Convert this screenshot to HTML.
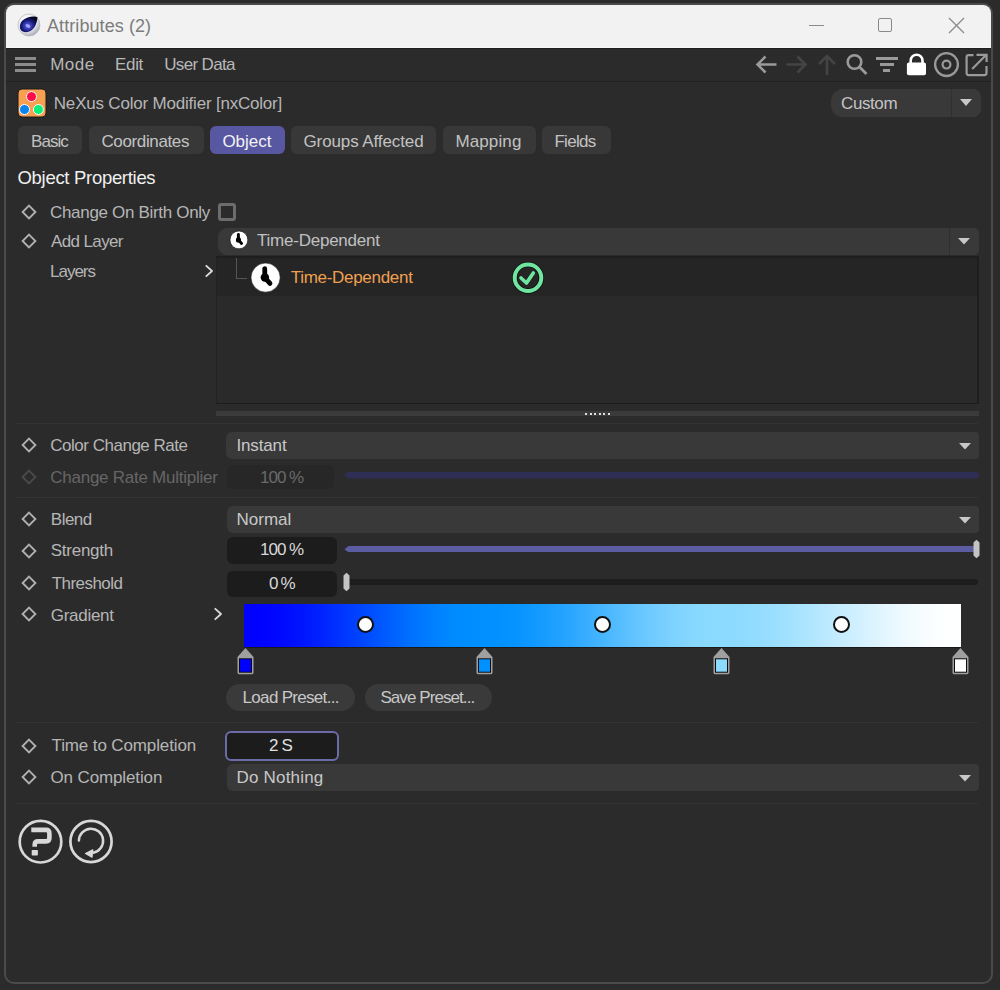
<!DOCTYPE html><html><head><meta charset="utf-8"><style>
html,body{margin:0;padding:0;}
body{width:1000px;height:990px;background:#2b2b2b;position:relative;overflow:hidden;font-family:"Liberation Sans", sans-serif;}
body div, body svg{position:absolute;}
.t{white-space:pre;line-height:20px;}
</style></head><body>
<div style="left:4px;top:3px;width:985px;height:977px;border:2px solid #4a4a4a;border-radius:10px;background:#2b2b2b"></div>
<div style="left:6px;top:5px;width:985px;height:42px;background:#f2f2f2;border-radius:8px 8px 0 0"></div>
<div style="left:6px;top:47px;width:985px;height:1px;background:#f8f8f8;"></div>
<div style="left:6px;top:48px;width:985px;height:1px;background:#1f1f1f;"></div>
<div style="left:6px;top:81px;width:985px;height:1px;background:#212121;"></div>
<svg style="left:17px;top:13px" width="24" height="24" viewBox="0 0 24 24"><defs>
<radialGradient id="lg1" cx="0.35" cy="0.3" r="0.8"><stop offset="0" stop-color="#ffffff"/><stop offset="0.6" stop-color="#e8e9ee"/><stop offset="1" stop-color="#9a9ea8"/></radialGradient>
<radialGradient id="lg2" cx="0.45" cy="0.6" r="0.6"><stop offset="0" stop-color="#9aa0ff"/><stop offset="0.25" stop-color="#4448c0"/><stop offset="0.6" stop-color="#161a78"/><stop offset="1" stop-color="#04051f"/></radialGradient>
</defs>
<circle cx="12" cy="12" r="11" fill="url(#lg1)" stroke="#b4b6bc" stroke-width="0.7"/>
<path d="M20.5,4.3 C18,2.8 10,3.2 5.5,7.5 C2.3,10.5 2.2,15.5 4.5,17.8 C7,20 12,19.5 15.5,16.5 C18.5,14 20,9.5 20.5,4.3 Z" fill="url(#lg2)"/>
<ellipse cx="11" cy="13" rx="2.6" ry="1.5" transform="rotate(30 11 13)" fill="#b0b6ff" opacity="0.7"/></svg>
<div class="t" style="left:47.00px;top:16px;font-size:18px;color:#7c7c7c;letter-spacing:0.077px;">Attributes (2)</div>
<div style="left:809px;top:25px;width:15px;height:1px;background:#8a8a8a;"></div>
<div style="left:878px;top:18px;width:12px;height:12px;border:1.5px solid #8a8a8a;border-radius:2px"></div>
<svg style="left:948px;top:17px" width="17" height="17" viewBox="0 0 17 17"><path d="M1,1 L16,16 M16,1 L1,16" stroke="#8a8a8a" stroke-width="1.3"/></svg>
<div style="left:15px;top:57px;width:21px;height:3px;background:#8c8c8c;"></div>
<div style="left:15px;top:63px;width:21px;height:3px;background:#8c8c8c;"></div>
<div style="left:15px;top:69px;width:21px;height:3px;background:#8c8c8c;"></div>
<div class="t" style="left:50.20px;top:55px;font-size:17px;color:#b8b8b8;letter-spacing:0.500px;">Mode</div>
<div class="t" style="left:115.00px;top:55px;font-size:17px;color:#b8b8b8;letter-spacing:-0.333px;">Edit</div>
<div class="t" style="left:164.20px;top:55px;font-size:17px;color:#b8b8b8;letter-spacing:-0.650px;">User Data</div>
<svg style="left:754px;top:52px" width="26" height="25" viewBox="0 0 26 25"><path d="M22.5,12.5 H4 M11.5,4.5 L3.5,12.5 L11.5,20.5" fill="none" stroke="#9a9a9a" stroke-width="2.6"/></svg>
<svg style="left:784px;top:52px" width="26" height="25" viewBox="0 0 26 25"><path d="M2.5,12.5 H21 M13.5,4.5 L21.5,12.5 L13.5,20.5" fill="none" stroke="#444444" stroke-width="2.6"/></svg>
<svg style="left:815px;top:52px" width="24" height="25" viewBox="0 0 24 25"><path d="M12,23 V4 M4,12 L12,4 L20,12" fill="none" stroke="#444444" stroke-width="2.6"/></svg>
<svg style="left:844px;top:52px" width="26" height="25" viewBox="0 0 26 25"><circle cx="10.5" cy="10" r="6.8" fill="none" stroke="#9a9a9a" stroke-width="2.6"/><path d="M15.5,15 L22.5,22" stroke="#9a9a9a" stroke-width="2.8"/></svg>
<div style="left:875.5px;top:56.8px;width:22px;height:3.2px;background:#9a9a9a;"></div>
<div style="left:880px;top:63px;width:13.5px;height:3.2px;background:#9a9a9a;"></div>
<div style="left:883px;top:69px;width:7px;height:3.2px;background:#9a9a9a;"></div>
<svg style="left:905px;top:52px" width="23" height="25" viewBox="0 0 23 25"><path d="M5.7,11 V8.6 A5.9,5.9 0 0 1 17.5,8.6 V11" fill="none" stroke="#ffffff" stroke-width="2.6"/><rect x="1.9" y="10.4" width="19.1" height="12.8" rx="2" fill="#ffffff"/></svg>
<svg style="left:933px;top:51px" width="27" height="27" viewBox="0 0 27 27"><circle cx="13.5" cy="13.6" r="11.4" fill="none" stroke="#9a9a9a" stroke-width="2.3"/><circle cx="13.5" cy="13.6" r="3.9" fill="none" stroke="#9a9a9a" stroke-width="2.2"/></svg>
<svg style="left:964px;top:52px" width="26" height="25" viewBox="0 0 26 25"><path d="M9.5,3.1 H4.6 Q2.6,3.1 2.6,5.1 V21.1 Q2.6,23.1 4.6,23.1 H20.5 Q22.5,23.1 22.5,21.1 V14" fill="none" stroke="#9a9a9a" stroke-width="2.2"/><path d="M8.2,17 L21.5,3.5 M12.5,2.8 H22.6 V10" fill="none" stroke="#9a9a9a" stroke-width="2.2"/></svg>
<svg style="left:17px;top:88px" width="30" height="30" viewBox="0 0 30 30"><rect x="1" y="1" width="28" height="28" rx="4" fill="#f7a052" stroke="#1a1a1a" stroke-width="1"/>
<circle cx="14.5" cy="8.6" r="5" fill="#ff0a48" stroke="#ffffff" stroke-width="1"/>
<circle cx="7.5" cy="21.5" r="5" fill="#0a84f0" stroke="#ffffff" stroke-width="1"/>
<circle cx="21.4" cy="21.5" r="5" fill="#08f07a" stroke="#ffffff" stroke-width="1"/></svg>
<div class="t" style="left:53.80px;top:94px;font-size:17px;color:#b6b6b6;letter-spacing:-0.200px;">NeXus Color Modifier [nxColor]</div>
<div style="left:831px;top:89px;width:150px;height:28px;background:#393939;border-radius:12px 8px 8px 12px"></div>
<div style="left:951px;top:89px;width:1px;height:28px;background:#2f2f2f;"></div>
<svg style="left:960px;top:99px" width="12" height="8" viewBox="0 0 12 8"><path d="M0,0 H12 L6,7 Z" fill="#c8c8c8"/></svg>
<div class="t" style="left:841.00px;top:94px;font-size:17px;color:#c4c4c4;letter-spacing:-0.400px;">Custom</div>
<div style="left:18px;top:126px;width:64px;height:28px;background:#383838;border-radius:6px"></div>
<div class="t" style="left:31.00px;top:132px;font-size:17px;color:#c2c2c2;letter-spacing:-0.950px;">Basic</div>
<div style="left:88.5px;top:126px;width:115.5px;height:28px;background:#383838;border-radius:6px"></div>
<div class="t" style="left:101.40px;top:132px;font-size:17px;color:#c2c2c2;letter-spacing:-0.360px;">Coordinates</div>
<div style="left:210px;top:126px;width:75px;height:28px;background:#5858a2;border-radius:6px"></div>
<div class="t" style="left:222.40px;top:132px;font-size:17px;color:#f2f2f2;letter-spacing:0.000px;">Object</div>
<div style="left:291px;top:126px;width:145px;height:28px;background:#383838;border-radius:6px"></div>
<div class="t" style="left:303.50px;top:132px;font-size:17px;color:#c2c2c2;letter-spacing:-0.107px;">Groups Affected</div>
<div style="left:442.5px;top:126px;width:93.0px;height:28px;background:#383838;border-radius:6px"></div>
<div class="t" style="left:455.40px;top:132px;font-size:17px;color:#c2c2c2;letter-spacing:0.133px;">Mapping</div>
<div style="left:541.5px;top:126px;width:69.0px;height:28px;background:#383838;border-radius:6px"></div>
<div class="t" style="left:554.40px;top:132px;font-size:17px;color:#c2c2c2;letter-spacing:-0.680px;">Fields</div>
<div class="t" style="left:17.50px;top:167.7px;font-size:18.5px;color:#f0f0f0;letter-spacing:-0.300px;">Object Properties</div>
<svg style="left:20.5px;top:203.5px" width="16" height="16" viewBox="0 0 16 16"><path d="M8,1.6 L14.4,8 L8,14.4 L1.6,8 Z" fill="none" stroke="#b0b0b0" stroke-width="1.9"/></svg>
<div class="t" style="left:50.00px;top:202.5px;font-size:17px;color:#b6b6b6;letter-spacing:-0.316px;">Change On Birth Only</div>
<div style="left:217.7px;top:202.5px;width:12.3px;height:12.3px;border:3px solid #6c6c6c;border-radius:3px"></div>
<svg style="left:20.5px;top:233.4px" width="16" height="16" viewBox="0 0 16 16"><path d="M8,1.6 L14.4,8 L8,14.4 L1.6,8 Z" fill="none" stroke="#b0b0b0" stroke-width="1.9"/></svg>
<div class="t" style="left:51.00px;top:231.6px;font-size:17px;color:#b6b6b6;letter-spacing:-0.625px;">Add Layer</div>
<div class="t" style="left:50.00px;top:261.6px;font-size:17px;color:#b6b6b6;letter-spacing:-1.000px;">Layers</div>
<svg style="left:202.5px;top:264px" width="12" height="14" viewBox="0 0 12 14"><path d="M3.3,1.8 L9,7 L3.3,12.2" fill="none" stroke="#dcdcdc" stroke-width="1.8" stroke-linecap="round" stroke-linejoin="round"/></svg>
<div style="left:218px;top:228px;width:761px;height:27px;background:#393939;border-radius:9px 5px 5px 9px"></div>
<div style="left:949px;top:228px;width:1px;height:27px;background:#2f2f2f;"></div>
<svg style="left:957.5px;top:238px" width="12" height="8" viewBox="0 0 12 8"><path d="M0,0 H12 L6,6.5 Z" fill="#c8c8c8"/></svg>
<svg style="left:229.29999999999998px;top:230.4px" width="19.8" height="19.8" viewBox="0 0 19.8 19.8"><circle cx="9.9" cy="9.9" r="8.9" fill="#ffffff" stroke="#111" stroke-width="0.6"/><circle cx="9.455" cy="9.9" r="2.581" fill="#000"/><path d="M9.366,4.382000000000001 L9.455,9.9 L12.57,13.46" fill="none" stroke="#000" stroke-width="2.9370000000000003" stroke-linecap="round" stroke-linejoin="round"/></svg>
<div class="t" style="left:257.00px;top:231.4px;font-size:17px;color:#c0c0c0;letter-spacing:-0.231px;">Time-Dependent</div>
<div style="left:216px;top:256px;width:763px;height:148px;background:#2a2a2a;box-sizing:border-box;border-left:1px solid #222222;border-top:2px solid #1e1e1e;border-right:2px solid #1e1e1e;border-bottom:1px solid #1d1d1d"></div>
<div style="left:217px;top:258px;width:760px;height:38px;background:#252525;"></div>
<div style="left:236px;top:258px;width:1px;height:21px;background:#555555;"></div>
<div style="left:236px;top:278px;width:11px;height:1px;background:#555555;"></div>
<svg style="left:249.70000000000002px;top:261.7px" width="31.2" height="31.2" viewBox="0 0 31.2 31.2"><circle cx="15.6" cy="15.6" r="14.6" fill="#ffffff" stroke="#111" stroke-width="0.6"/><circle cx="14.87" cy="15.6" r="4.234" fill="#000"/><path d="M14.724,6.548 L14.87,15.6 L19.98,21.439999999999998" fill="none" stroke="#000" stroke-width="4.8180000000000005" stroke-linecap="round" stroke-linejoin="round"/></svg>
<div class="t" style="left:290.70px;top:267.9px;font-size:17px;color:#f0a050;letter-spacing:-0.292px;">Time-Dependent</div>
<svg style="left:510px;top:260px" width="36" height="36" viewBox="0 0 36 36"><circle cx="18" cy="17.7" r="13.3" fill="none" stroke="#0a0a0a" stroke-width="5.4"/><circle cx="18" cy="17.7" r="13.3" fill="none" stroke="#6ee6a0" stroke-width="4"/><path d="M11,18 L16.5,23 L23.3,13" fill="none" stroke="#6ee6a0" stroke-width="3.6" stroke-linecap="round" stroke-linejoin="round"/></svg>
<div style="left:216px;top:411px;width:763px;height:5px;background:#3b3b3b;"></div>
<div style="left:585px;top:413px;width:2px;height:2px;background:#e0e0e0;"></div>
<div style="left:589.5px;top:413px;width:2px;height:2px;background:#e0e0e0;"></div>
<div style="left:594px;top:413px;width:2px;height:2px;background:#e0e0e0;"></div>
<div style="left:598.5px;top:413px;width:2px;height:2px;background:#e0e0e0;"></div>
<div style="left:603px;top:413px;width:2px;height:2px;background:#e0e0e0;"></div>
<div style="left:607.5px;top:413px;width:2px;height:2px;background:#e0e0e0;"></div>
<div style="left:16px;top:423px;width:962px;height:1px;background:#333333;"></div>
<svg style="left:20.5px;top:437.2px" width="16" height="16" viewBox="0 0 16 16"><path d="M8,1.6 L14.4,8 L8,14.4 L1.6,8 Z" fill="none" stroke="#b0b0b0" stroke-width="1.9"/></svg>
<div class="t" style="left:50.30px;top:435.8px;font-size:17px;color:#b6b6b6;letter-spacing:-0.488px;">Color Change Rate</div>
<div style="left:226px;top:432px;width:753px;height:27px;background:#393939;border-radius:6px 4px 4px 6px"></div>
<svg style="left:958.5px;top:443.2px" width="12" height="8" viewBox="0 0 12 8"><path d="M0,0 H12 L6,6.5 Z" fill="#c8c8c8"/></svg>
<div class="t" style="left:236.40px;top:436px;font-size:17px;color:#c8c8c8;letter-spacing:-0.133px;">Instant</div>
<svg style="left:20.5px;top:468.9px" width="16" height="16" viewBox="0 0 16 16"><path d="M8,1.6 L14.4,8 L8,14.4 L1.6,8 Z" fill="none" stroke="#4a4a4a" stroke-width="1.9"/></svg>
<div class="t" style="left:50.30px;top:467.8px;font-size:17px;color:#666666;letter-spacing:-0.257px;">Change Rate Multiplier</div>
<div style="left:227px;top:465px;width:107px;height:24px;background:#272727;border-radius:6px"></div>
<div class="t" style="left:260.00px;top:468px;font-size:17px;color:#6a6a6a;letter-spacing:-1.000px;">100 %</div>
<svg style="left:344px;top:472px" width="635" height="6.5" viewBox="0 0 635 6.5"><path d="M0,3.25 L4.0625,0 H631.75 A3.25,3.25 0 0 1 631.75,6.5 H4.0625 Z" fill="#2f2e54"/></svg>
<div style="left:16px;top:497px;width:962px;height:1px;background:#333333;"></div>
<svg style="left:20.5px;top:510.9px" width="16" height="16" viewBox="0 0 16 16"><path d="M8,1.6 L14.4,8 L8,14.4 L1.6,8 Z" fill="none" stroke="#b0b0b0" stroke-width="1.9"/></svg>
<div class="t" style="left:50.80px;top:510px;font-size:17px;color:#b6b6b6;letter-spacing:-0.500px;">Blend</div>
<div style="left:227px;top:505.5px;width:752px;height:27.100000000000023px;background:#393939;border-radius:6px 4px 4px 6px"></div>
<svg style="left:958.5px;top:516.75px" width="12" height="8" viewBox="0 0 12 8"><path d="M0,0 H12 L6,6.5 Z" fill="#c8c8c8"/></svg>
<div class="t" style="left:236.40px;top:510px;font-size:17px;color:#c8c8c8;letter-spacing:0.040px;">Normal</div>
<svg style="left:20.5px;top:542.6px" width="16" height="16" viewBox="0 0 16 16"><path d="M8,1.6 L14.4,8 L8,14.4 L1.6,8 Z" fill="none" stroke="#b0b0b0" stroke-width="1.9"/></svg>
<div class="t" style="left:50.80px;top:541px;font-size:17px;color:#b6b6b6;letter-spacing:-0.271px;">Strength</div>
<div style="left:227px;top:537px;width:110px;height:27px;background:#1c1c1c;border-radius:6px"></div>
<div class="t" style="left:260.00px;top:540.4px;font-size:17px;color:#d8d8d8;letter-spacing:-1.000px;">100 %</div>
<svg style="left:344px;top:545.8px" width="632" height="6.4" viewBox="0 0 632 6.4"><path d="M0,3.2 L4.0,0 H628.8 A3.2,3.2 0 0 1 628.8,6.4 H4.0 Z" fill="#5b5ca2"/></svg>
<svg style="left:972px;top:539px" width="9" height="20" viewBox="0 0 9 20"><path d="M1.5,3.5 L4.5,0.8 L7.5,3.5 V16.5 L4.5,19.2 L1.5,16.5 Z" fill="#c4c4c4"/></svg>
<svg style="left:20.5px;top:574.9px" width="16" height="16" viewBox="0 0 16 16"><path d="M8,1.6 L14.4,8 L8,14.4 L1.6,8 Z" fill="none" stroke="#b0b0b0" stroke-width="1.9"/></svg>
<div class="t" style="left:51.80px;top:574px;font-size:17px;color:#b6b6b6;letter-spacing:-0.562px;">Threshold</div>
<div style="left:227px;top:570.5px;width:110px;height:26px;background:#1c1c1c;border-radius:6px"></div>
<div class="t" style="left:269.00px;top:573.6px;font-size:17px;color:#d8d8d8;letter-spacing:-1.300px;">0 %</div>
<div style="left:346px;top:578.8px;width:632px;height:6.4px;background:#1d1d1d;border-radius:0 3.2px 3.2px 0"></div>
<svg style="left:342px;top:572px" width="9" height="20" viewBox="0 0 9 20"><path d="M1.5,3.5 L4.5,0.8 L7.5,3.5 V16.5 L4.5,19.2 L1.5,16.5 Z" fill="#c4c4c4"/></svg>
<svg style="left:20.5px;top:606.2px" width="16" height="16" viewBox="0 0 16 16"><path d="M8,1.6 L14.4,8 L8,14.4 L1.6,8 Z" fill="none" stroke="#b0b0b0" stroke-width="1.9"/></svg>
<div class="t" style="left:50.80px;top:605.5px;font-size:17px;color:#b6b6b6;letter-spacing:-0.286px;">Gradient</div>
<svg style="left:211.5px;top:607.3px" width="12" height="14" viewBox="0 0 12 14"><path d="M3.3,1.8 L9,7 L3.3,12.2" fill="none" stroke="#dcdcdc" stroke-width="1.8" stroke-linecap="round" stroke-linejoin="round"/></svg>
<div style="left:244px;top:604px;width:717px;height:43px;background:linear-gradient(to right,rgb(0, 0, 255) 0.00%,rgb(0, 2, 255) 2.09%,rgb(0, 6, 255) 4.18%,rgb(0, 13, 255) 6.28%,rgb(0, 22, 255) 8.37%,rgb(0, 33, 255) 10.46%,rgb(0, 46, 255) 12.55%,rgb(0, 59, 255) 14.64%,rgb(0, 72, 255) 16.74%,rgb(0, 85, 255) 18.83%,rgb(0, 98, 255) 20.92%,rgb(0, 111, 255) 23.01%,rgb(0, 122, 255) 25.10%,rgb(0, 131, 255) 27.20%,rgb(0, 138, 255) 29.29%,rgb(0, 142, 255) 31.38%,rgb(0, 144, 255) 33.47%,rgb(2, 145, 255) 35.54%,rgb(6, 147, 255) 37.60%,rgb(13, 151, 255) 39.67%,rgb(22, 156, 255) 41.74%,rgb(32, 161, 255) 43.80%,rgb(44, 167, 255) 45.87%,rgb(57, 174, 255) 47.93%,rgb(70, 181, 255) 50.00%,rgb(83, 188, 255) 52.07%,rgb(96, 195, 255) 54.13%,rgb(108, 201, 255) 56.20%,rgb(118, 206, 255) 58.26%,rgb(127, 211, 255) 60.33%,rgb(134, 215, 255) 62.40%,rgb(138, 217, 255) 64.46%,rgb(140, 218, 255) 66.53%,rgb(141, 218, 255) 68.62%,rgb(145, 220, 255) 70.71%,rgb(151, 221, 255) 72.80%,rgb(158, 224, 255) 74.90%,rgb(167, 227, 255) 76.99%,rgb(176, 230, 255) 79.08%,rgb(187, 233, 255) 81.17%,rgb(198, 236, 255) 83.26%,rgb(208, 240, 255) 85.36%,rgb(219, 243, 255) 87.45%,rgb(228, 246, 255) 89.54%,rgb(237, 249, 255) 91.63%,rgb(244, 252, 255) 93.72%,rgb(250, 253, 255) 95.82%,rgb(254, 255, 255) 97.91%,rgb(255, 255, 255) 100%);"></div>
<div style="left:244px;top:647px;width:717px;height:1px;background:#1a1a1a;"></div>
<div style="left:356.5px;top:615.8px;width:13px;height:13px;border:2px solid #111;border-radius:50%;background:#fff"></div>
<div style="left:593.5px;top:615.8px;width:13px;height:13px;border:2px solid #111;border-radius:50%;background:#fff"></div>
<div style="left:832.5px;top:615.8px;width:13px;height:13px;border:2px solid #111;border-radius:50%;background:#fff"></div>
<svg style="left:236.5px;top:647px" width="17" height="28" viewBox="0 0 17 28"><path d="M8.5,1 L16.5,10 V25.8 Q16.5,27.2 15.1,27.2 H1.9 Q0.5,27.2 0.5,25.8 V10 Z" fill="#a0a0a0"/><rect x="2" y="11.3" width="13" height="14.4" fill="#0c0c0c"/><rect x="3" y="12.3" width="11" height="12.4" fill="#0000ff"/></svg>
<svg style="left:475.5px;top:647px" width="17" height="28" viewBox="0 0 17 28"><path d="M8.5,1 L16.5,10 V25.8 Q16.5,27.2 15.1,27.2 H1.9 Q0.5,27.2 0.5,25.8 V10 Z" fill="#a0a0a0"/><rect x="2" y="11.3" width="13" height="14.4" fill="#0c0c0c"/><rect x="3" y="12.3" width="11" height="12.4" fill="#0090ff"/></svg>
<svg style="left:712.5px;top:647px" width="17" height="28" viewBox="0 0 17 28"><path d="M8.5,1 L16.5,10 V25.8 Q16.5,27.2 15.1,27.2 H1.9 Q0.5,27.2 0.5,25.8 V10 Z" fill="#a0a0a0"/><rect x="2" y="11.3" width="13" height="14.4" fill="#0c0c0c"/><rect x="3" y="12.3" width="11" height="12.4" fill="#8cdaff"/></svg>
<svg style="left:951.5px;top:647px" width="17" height="28" viewBox="0 0 17 28"><path d="M8.5,1 L16.5,10 V25.8 Q16.5,27.2 15.1,27.2 H1.9 Q0.5,27.2 0.5,25.8 V10 Z" fill="#a0a0a0"/><rect x="2" y="11.3" width="13" height="14.4" fill="#0c0c0c"/><rect x="3" y="12.3" width="11" height="12.4" fill="#ffffff"/></svg>
<div style="left:226px;top:684px;width:129px;height:27px;background:#3a3a3a;border-radius:13.5px"></div>
<div class="t" style="left:242.60px;top:688px;font-size:17px;color:#c8c8c8;letter-spacing:-0.692px;">Load Preset...</div>
<div style="left:365px;top:684px;width:127px;height:27px;background:#3a3a3a;border-radius:13.5px"></div>
<div class="t" style="left:380.40px;top:688px;font-size:17px;color:#c8c8c8;letter-spacing:-0.923px;">Save Preset...</div>
<div style="left:16px;top:722px;width:962px;height:1px;background:#333333;"></div>
<svg style="left:20.5px;top:737.6px" width="16" height="16" viewBox="0 0 16 16"><path d="M8,1.6 L14.4,8 L8,14.4 L1.6,8 Z" fill="none" stroke="#b0b0b0" stroke-width="1.9"/></svg>
<div class="t" style="left:51.50px;top:736px;font-size:17px;color:#b6b6b6;letter-spacing:-0.118px;">Time to Completion</div>
<div style="left:225px;top:730.5px;width:110px;height:26.5px;border:2px solid #6b6ba8;border-radius:6px;background:#1c1c1c"></div>
<div class="t" style="left:269.00px;top:736px;font-size:17px;color:#e0e0e0;letter-spacing:-0.850px;">2 S</div>
<svg style="left:20.5px;top:768.9px" width="16" height="16" viewBox="0 0 16 16"><path d="M8,1.6 L14.4,8 L8,14.4 L1.6,8 Z" fill="none" stroke="#b0b0b0" stroke-width="1.9"/></svg>
<div class="t" style="left:50.50px;top:768.4px;font-size:17px;color:#b6b6b6;letter-spacing:-0.125px;">On Completion</div>
<div style="left:227px;top:764px;width:752px;height:27px;background:#393939;border-radius:6px 4px 4px 6px"></div>
<svg style="left:958.5px;top:775.2px" width="12" height="8" viewBox="0 0 12 8"><path d="M0,0 H12 L6,6.5 Z" fill="#c8c8c8"/></svg>
<div class="t" style="left:236.60px;top:768.4px;font-size:17px;color:#c8c8c8;letter-spacing:0.178px;">Do Nothing</div>
<div style="left:16px;top:803px;width:962px;height:1px;background:#333333;"></div>
<svg style="left:17px;top:818px" width="48" height="48" viewBox="0 0 48 48"><circle cx="23.5" cy="23.7" r="20.8" fill="none" stroke="#d8d8d8" stroke-width="2.7"/><path d="M14.3,11.9 H29 Q32.4,11.9 32.4,15.3 V20 Q32.4,23.4 29,23.4 H21 Q17.7,23.4 17.7,26.7 V28.8" fill="none" stroke="#d8d8d8" stroke-width="4.6"/><rect x="14.7" y="31.9" width="6.2" height="5.6" rx="0.8" fill="#d8d8d8"/></svg>
<svg style="left:67px;top:818px" width="48" height="48" viewBox="0 0 48 48"><circle cx="24" cy="23.5" r="20.6" fill="none" stroke="#d8d8d8" stroke-width="2.7"/><path d="M11.9,22.6 A12.1,12.1 0 1 1 26.2,34.7" fill="none" stroke="#d8d8d8" stroke-width="2.5" stroke-linecap="round"/><path d="M18.5,35.6 L25.8,31.8 L25,39.2 Z" fill="#d8d8d8" stroke="#d8d8d8" stroke-width="1.2" stroke-linejoin="round"/></svg>
</body></html>
